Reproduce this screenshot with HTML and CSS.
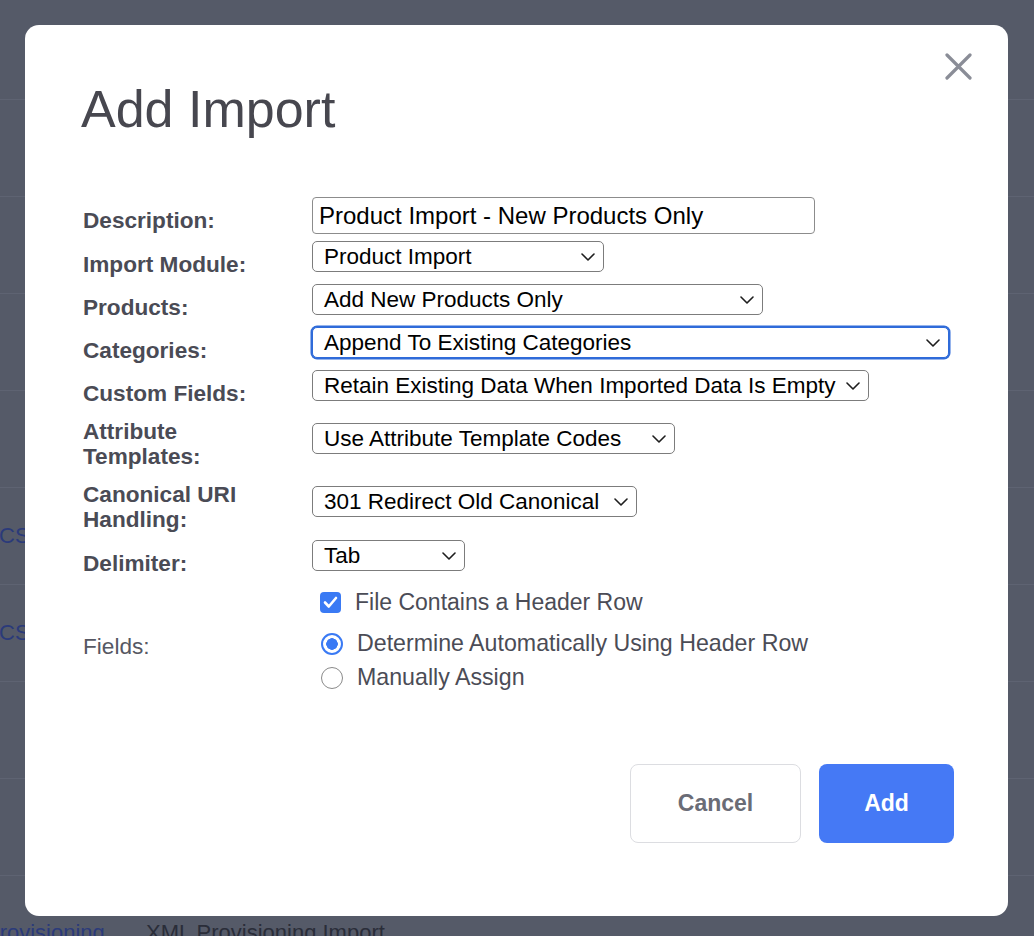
FILE: index.html
```html
<!DOCTYPE html>
<html lang="en">
<head>
<meta charset="utf-8">
<title>Imports</title>
<link rel="stylesheet" href="styles.css">
</head>
<body>
  <main class="page">
    <div class="page-header"></div>
    <div class="page-row"></div>
    <div class="page-row"></div>
    <div class="page-row"></div>
    <div class="page-row"></div>
    <div class="page-row"><a class="page-link">CSV Product Import</a><span class="page-text">Product CSV Import</span></div>
    <div class="page-row"><a class="page-link">CSV Category Import</a><span class="page-text">Category CSV Import</span></div>
    <div class="page-row"></div>
    <div class="page-row"></div>
    <div class="page-row page-row--low"><a class="page-link page-link--shift">Provisioning</a><span class="page-text">XML Provisioning Import</span></div>
  </main>

  <div class="backdrop">
    <section class="modal" role="dialog" aria-labelledby="modal-title">
      <button class="modal-close" type="button" aria-label="Close">
        <svg width="27" height="27" viewBox="0 0 27 27" aria-hidden="true">
          <path d="M2 2 L25 25 M25 2 L2 25" stroke="#8a8d97" stroke-width="3.2" stroke-linecap="round" fill="none"/>
        </svg>
      </button>

      <h1 class="modal-title" id="modal-title">Add Import</h1>

      <form class="import-form">
        <div class="form-row">
          <label class="form-label">Description:</label>
          <input class="text-input" type="text" value="Product Import - New Products Only">
        </div>

        <div class="form-row">
          <label class="form-label">Import Module:</label>
          <div class="select select--module" role="combobox">
            <span>Product Import</span>
            <svg class="chevron" width="14" height="8" viewBox="0 0 14 8" aria-hidden="true"><path d="M1 1 L7 7 L13 1" /></svg>
          </div>
        </div>

        <div class="form-row">
          <label class="form-label">Products:</label>
          <div class="select select--products" role="combobox">
            <span>Add New Products Only</span>
            <svg class="chevron" width="14" height="8" viewBox="0 0 14 8" aria-hidden="true"><path d="M1 1 L7 7 L13 1" /></svg>
          </div>
        </div>

        <div class="form-row">
          <label class="form-label">Categories:</label>
          <div class="select select--categories is-focused" role="combobox">
            <span>Append To Existing Categories</span>
            <svg class="chevron" width="14" height="8" viewBox="0 0 14 8" aria-hidden="true"><path d="M1 1 L7 7 L13 1" /></svg>
          </div>
        </div>

        <div class="form-row">
          <label class="form-label">Custom Fields:</label>
          <div class="select select--custom" role="combobox">
            <span>Retain Existing Data When Imported Data Is Empty</span>
            <svg class="chevron" width="14" height="8" viewBox="0 0 14 8" aria-hidden="true"><path d="M1 1 L7 7 L13 1" /></svg>
          </div>
        </div>

        <div class="form-row form-row--wrap">
          <label class="form-label">Attribute<br>Templates:</label>
          <div class="select select--attribute" role="combobox">
            <span>Use Attribute Template Codes</span>
            <svg class="chevron" width="14" height="8" viewBox="0 0 14 8" aria-hidden="true"><path d="M1 1 L7 7 L13 1" /></svg>
          </div>
        </div>

        <div class="form-row form-row--wrap">
          <label class="form-label">Canonical URI<br>Handling:</label>
          <div class="select select--canonical" role="combobox">
            <span>301 Redirect Old Canonical</span>
            <svg class="chevron" width="14" height="8" viewBox="0 0 14 8" aria-hidden="true"><path d="M1 1 L7 7 L13 1" /></svg>
          </div>
        </div>

        <div class="form-row">
          <label class="form-label">Delimiter:</label>
          <div class="select select--delimiter" role="combobox">
            <span>Tab</span>
            <svg class="chevron" width="14" height="8" viewBox="0 0 14 8" aria-hidden="true"><path d="M1 1 L7 7 L13 1" /></svg>
          </div>
        </div>

        <div class="form-row form-row--check">
          <label class="check">
            <span class="check-box">
              <svg width="21" height="21" viewBox="0 0 21 21" aria-hidden="true"><path d="M5 10.5 L8.8 14.5 L16 6" stroke="#fff" stroke-width="2.6" stroke-linecap="round" stroke-linejoin="round" fill="none"/></svg>
            </span>
            File Contains a Header Row
          </label>
        </div>

        <div class="form-row form-row--fields">
          <span class="form-label form-label--plain">Fields:</span>
          <div class="radio-group">
            <label class="radio"><span class="radio-dot is-checked"></span>Determine Automatically Using Header Row</label>
            <label class="radio"><span class="radio-dot"></span>Manually Assign</label>
          </div>
        </div>
      </form>

      <div class="modal-actions">
        <button class="btn btn--secondary" type="button">Cancel</button>
        <button class="btn btn--primary" type="button">Add</button>
      </div>
    </section>
  </div>
</body>
</html>
```

FILE: styles.css
```css
* {
  box-sizing: border-box;
}

html,
body {
  margin: 0;
  height: 100%;
}

body {
  font-family: "Liberation Sans", Arial, sans-serif;
  background: #555a68;
  overflow: hidden;
}

/* dimmed listing behind the dialog */
.page {
  height: 100%;
}

.page-header {
  height: 100px;
  border-bottom: 1px solid #5e6372;
}

.page-row {
  height: 97px;
  border-bottom: 1px solid #5e6372;
  display: flex;
  align-items: center;
  font-size: 22px;
  white-space: nowrap;
}

.page-row--low {
  padding-top: 18px;
}

.page-link {
  flex: none;
  width: 147px;
  margin-left: -1px;
  color: #2b3a7a;
}

.page-link--shift {
  margin-left: -15px;
  width: 161px;
}

.page-text {
  color: #2a2d39;
}

/* dialog */
.backdrop {
  position: fixed;
  inset: 0;
  padding: 25px 26px 20px 25px;
  display: flex;
}

.modal {
  position: relative;
  flex: 1;
  display: flex;
  flex-direction: column;
  background: #fff;
  border-radius: 14px;
  padding: 54px 54px 73px 58px;
}

.modal-close {
  position: absolute;
  top: 28px;
  right: 36px;
  width: 27px;
  height: 27px;
  padding: 0;
  border: 0;
  background: none;
  display: flex;
}

.modal-title {
  margin: 0 0 0 -2px;
  font-size: 52px;
  line-height: 60px;
  font-weight: 400;
  color: #47474f;
}

.import-form {
  margin-top: 58px;
}

.form-row {
  display: flex;
  align-items: flex-start;
  margin-bottom: 7px;
}

.form-label {
  flex: none;
  width: 229px;
  padding-top: 11px;
  font-size: 22.6px;
  line-height: 25px;
  font-weight: 700;
  color: #4a4b55;
}

.form-row--wrap {
  margin-top: 14px;
  margin-bottom: 8px;
}

.form-row--wrap .form-label {
  padding-top: 0;
  line-height: 24.5px;
}

.form-row--wrap .select {
  margin-top: 3px;
}

.text-input {
  width: 503px;
  height: 37px;
  border: 1px solid #8c8c8c;
  border-radius: 4px;
  padding: 0 6px;
  font-family: "Liberation Sans", Arial, sans-serif;
  font-size: 24px;
  color: #000;
  outline: none;
}

.select {
  height: 31px;
  display: flex;
  align-items: center;
  justify-content: space-between;
  padding: 1px 8px 0 11px;
  border: 1px solid #7c7c7c;
  border-radius: 5px;
  background: #fff;
  font-size: 22.5px;
  color: #000;
  white-space: nowrap;
}

.select.is-focused {
  border-color: #2f6bd9;
  box-shadow: 0 0 0 1.5px #2f6bd9;
}

.chevron {
  flex: none;
}

.chevron path {
  fill: none;
  stroke: #1e1e1e;
  stroke-width: 1.6;
  stroke-linecap: round;
  stroke-linejoin: round;
}

.select--module { width: 292px; }
.select--products { width: 451px; }
.select--categories { width: 637px; }
.select--custom { width: 557px; }
.select--attribute { width: 363px; }
.select--canonical { width: 325px; }
.select--delimiter { width: 153px; }

/* header-row checkbox */
.form-row--check {
  padding-top: 7px;
  padding-left: 237px;
  margin-bottom: 16px;
}

.check {
  display: flex;
  align-items: center;
  gap: 14px;
  font-size: 23px;
  line-height: 25px;
  color: #4b4c56;
}

.check-box {
  width: 21px;
  height: 21px;
  border-radius: 4px;
  background: #3a7af4;
  display: flex;
}

/* field assignment radios */
.form-label--plain {
  padding-top: 3px;
  font-weight: 400;
  color: #565863;
}

.radio-group {
  padding-left: 9px;
}

.radio {
  display: flex;
  align-items: center;
  gap: 14px;
  height: 25px;
  font-size: 23.2px;
  color: #4b4c56;
}

.radio + .radio {
  margin-top: 9px;
}

.radio-dot {
  flex: none;
  width: 22px;
  height: 22px;
  border-radius: 50%;
  border: 1.5px solid #8a8a8a;
  background: #fff;
}

.radio-dot.is-checked {
  border: 2px solid #3a7af4;
  background: radial-gradient(circle, #3a7af4 0 5.5px, #fff 6px);
}

/* footer buttons */
.modal-actions {
  margin-top: auto;
  display: flex;
  justify-content: flex-end;
  gap: 18px;
}

.btn {
  height: 79px;
  border-radius: 8px;
  font-family: "Liberation Sans", Arial, sans-serif;
  font-size: 23px;
  font-weight: 700;
  cursor: pointer;
}

.btn--secondary {
  width: 171px;
  background: #fff;
  border: 1px solid #dcdde1;
  color: #6a6c76;
}

.btn--primary {
  width: 135px;
  background: #4579f5;
  border: 0;
  color: #fff;
}
```
